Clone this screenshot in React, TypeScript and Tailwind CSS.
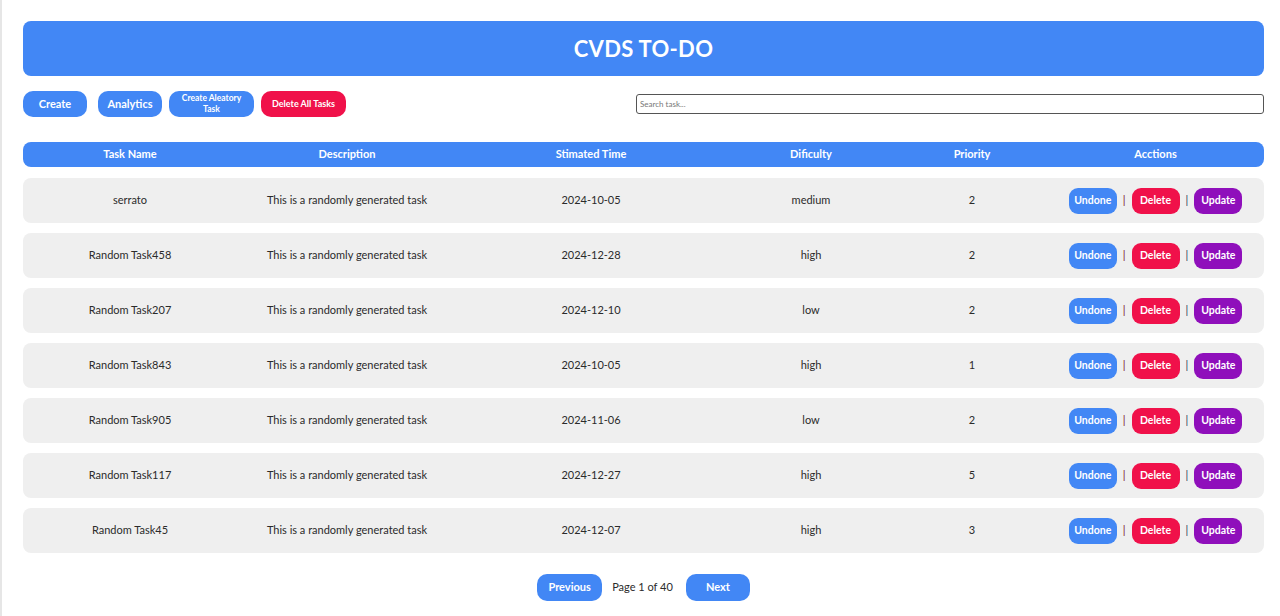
import React from "react";

const rows = [
  { name: "serrato", date: "2024-10-05", diff: "medium", pr: 2 },
  { name: "Random Task458", date: "2024-12-28", diff: "high", pr: 2 },
  { name: "Random Task207", date: "2024-12-10", diff: "low", pr: 2 },
  { name: "Random Task843", date: "2024-10-05", diff: "high", pr: 1 },
  { name: "Random Task905", date: "2024-11-06", diff: "low", pr: 2 },
  { name: "Random Task117", date: "2024-12-27", diff: "high", pr: 5 },
  { name: "Random Task45", date: "2024-12-07", diff: "high", pr: 3 },
];

const grid = "grid grid-cols-[214px_220px_268px_172px_150px_217px] items-center";

export default function App() {
  return (
    <div
      className="w-[1280px] h-[616px] bg-white overflow-hidden border-l-2 border-[#e6e6e6] text-[#2b2b2b]"
      style={{ fontFamily: "Lato, 'Noto Sans', sans-serif" }}
    >
      <div className="pl-[21px] pr-[16px] pt-[21px]">
        <div className="h-[55px] rounded-[8px] bg-[#4287f5] flex items-center justify-center">
          <h1 className="text-white font-bold text-[22px] tracking-[0.3px]">CVDS TO-DO</h1>
        </div>

        <div className="flex items-center mt-[15px] h-[26px]">
          <button className="w-[64px] h-[26px] rounded-[10px] bg-[#4287f5] text-white font-bold text-[11px]">Create</button>
          <button className="ml-[11px] w-[64px] h-[26px] rounded-[10px] bg-[#4287f5] text-white font-bold text-[11px]">Analytics</button>
          <button className="ml-[7px] w-[85px] h-[26px] rounded-[10px] bg-[#4287f5] text-white font-bold text-[8.5px] leading-[11px]">Create Aleatory<br />Task</button>
          <button className="ml-[7px] w-[85px] h-[26px] rounded-[10px] bg-[#f0114a] text-white font-bold text-[9px]">Delete All Tasks</button>
          <input
            className="ml-[290px] flex-1 h-[20px] border border-[#555] rounded-[3px] px-[3px] text-[8px] outline-none placeholder:text-[#777]"
            placeholder="Search task..."
          />
        </div>

        <div className={`${grid} mt-[25px] h-[25px] rounded-[8px] bg-[#4287f5] text-white font-bold text-[11px] text-center`}>
          <div>Task Name</div>
          <div>Description</div>
          <div>Stimated Time</div>
          <div>Dificulty</div>
          <div>Priority</div>
          <div>Acctions</div>
        </div>

        <div className="flex flex-col gap-[10px] mt-[11px]">
          {rows.map((r) => (
            <div key={r.name} className={`${grid} h-[45px] rounded-[8px] bg-[#efefef] text-[11px] text-center`}>
              <div>{r.name}</div>
              <div>This is a randomly generated task</div>
              <div>{r.date}</div>
              <div>{r.diff}</div>
              <div>{r.pr}</div>
              <div className="flex items-center justify-center gap-[6px]">
                <button className="w-[48px] h-[26px] rounded-[9px] bg-[#4287f5] text-white font-bold text-[10.5px]">Undone</button>
                <span className="text-[#7a2030] text-[11px]">|</span>
                <button className="w-[48px] h-[26px] rounded-[9px] bg-[#f0114a] text-white font-bold text-[10.5px]">Delete</button>
                <span className="text-[#334155] text-[11px]">|</span>
                <button className="w-[48px] h-[26px] rounded-[9px] bg-[#8f0fbb] text-white font-bold text-[10.5px]">Update</button>
              </div>
            </div>
          ))}
        </div>

        <div className="flex items-center justify-center mt-[21px]">
          <button className="w-[65px] h-[27px] rounded-[10px] bg-[#4287f5] text-white font-bold text-[11px]">Previous</button>
          <span className="ml-[10px] mr-[13px] text-[11px]">Page 1 of 40</span>
          <button className="w-[64px] h-[27px] rounded-[10px] bg-[#4287f5] text-white font-bold text-[11px]">Next</button>
        </div>
      </div>
    </div>
  );
}
